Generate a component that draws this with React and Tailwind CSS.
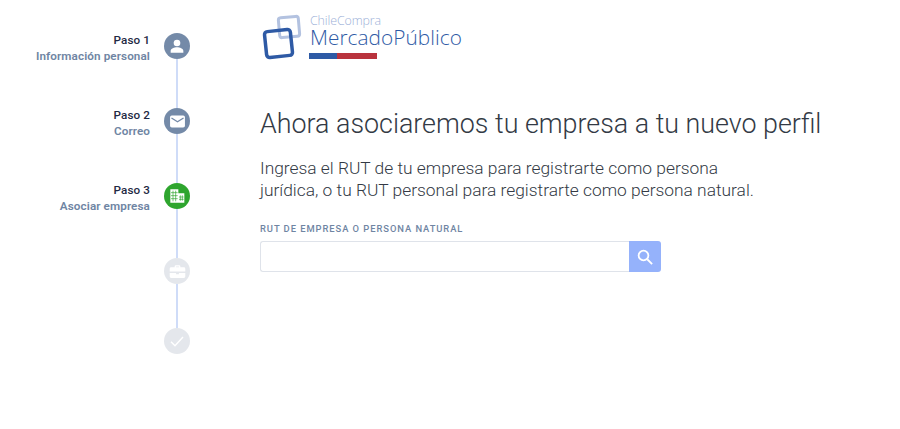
const STEPS = [
  { title: "Paso 1", label: "Información personal", icon: "user", color: "bg-[#748aa8]", height: "h-[75px]" },
  { title: "Paso 2", label: "Correo", icon: "mail", color: "bg-[#748aa8]", height: "h-[75px]" },
  { title: "Paso 3", label: "Asociar empresa", icon: "building", color: "bg-[#2ea52e]", height: "h-[75px]" },
  { icon: "case", color: "bg-[#e4e7ec]", height: "h-[70px]" },
  { icon: "check", color: "bg-[#e4e7ec]", height: "h-[26px]", last: true },
];

function StepIcon({ name }) {
  if (name === "user")
    return (
      <svg width="16" height="16" viewBox="0 0 24 24" fill="#fff">
        <circle cx="12" cy="7.5" r="5" />
        <path d="M2.5 22v-2.5c0-3.6 5.5-5.5 9.5-5.5s9.5 1.9 9.5 5.5V22z" />
      </svg>
    );
  if (name === "mail")
    return (
      <svg width="17" height="17" viewBox="0 0 24 24">
        <rect x="1.5" y="3.5" width="21" height="17" rx="2.5" fill="#fff" />
        <path d="M3.5 7l8.5 5.5L20.5 7" fill="none" stroke="#748aa8" strokeWidth="1.8" />
      </svg>
    );
  if (name === "building")
    return (
      <svg width="16" height="16" viewBox="0 0 24 24">
        <path d="M2 2h12v20H2zM14 8h9v14h-9z" fill="#fff" />
        <path d="M6 4v16M10 4v16M3 7h10M3 11.5h10M3 16h10M17 11v8M20 11v8M15 13.5h7M15 17h7" stroke="#2ea52e" strokeWidth="1" fill="none" />
      </svg>
    );
  if (name === "case")
    return (
      <svg width="17" height="17" viewBox="0 0 24 24" fill="#fff">
        <path d="M8 6V4.5A1.5 1.5 0 0 1 9.5 3h5A1.5 1.5 0 0 1 16 4.5V6h5a2 2 0 0 1 2 2v4H1V8a2 2 0 0 1 2-2zm2 0h4V5h-4z" fillRule="evenodd" />
        <path d="M1 14h9v2h4v-2h9v5a2 2 0 0 1-2 2H3a2 2 0 0 1-2-2z" />
      </svg>
    );
  return (
    <svg width="16" height="16" viewBox="0 0 24 24" fill="none" stroke="#fff" strokeWidth="2.2">
      <path d="M3 13l6 6L21 6" />
    </svg>
  );
}

function Step({ step }) {
  return (
    <div className={`flex justify-end gap-[14px] ${step.height}`}>
      {step.title && (
        <div className="text-right text-[11.7px] leading-[16px] font-medium mt-[-1px] tracking-[0.1px]">
          <p className="text-[#1f2a44]">{step.title}</p>
          <p className="text-[#6f85a3] font-semibold">{step.label}</p>
        </div>
      )}
      <div className="flex flex-col items-center w-[26px]">
        <div className={`w-[26px] h-[26px] shrink-0 rounded-full flex items-center justify-center ${step.color}`}>
          <StepIcon name={step.icon} />
        </div>
        {!step.last && <div className="w-[2px] flex-1 bg-[#cfdcf8]" />}
      </div>
    </div>
  );
}

function Logo() {
  return (
    <div className="flex items-start h-[47px] pl-[2px]">
      <svg width="44" height="46" viewBox="0 0 44 46" className="shrink-0">
        <rect x="17" y="3" width="20" height="20" rx="2.5" transform="rotate(-5 27 13)" fill="none" stroke="#b3c2e0" strokeWidth="3" />
        <rect x="3.5" y="16.5" width="26" height="26" rx="3" transform="rotate(-6 16.5 29.5)" fill="none" stroke="#2e5aa5" strokeWidth="3.5" />
      </svg>
      <div className="ml-[4px] font-['Open_Sans',sans-serif]">
        <p className="text-[12.4px] leading-[13px] font-light text-[#9db1d8] tracking-[-0.1px]">ChileCompra</p>
        <p className="text-[20.8px] leading-[21px] font-light text-[#2e5aa5] tracking-[0.05px]">MercadoPúblico</p>
        <div className="flex h-[6px] mt-[5px] -ml-[1px]">
          <div className="w-[28px] bg-[#2e5aa5]" />
          <div className="w-[40px] bg-[#b9333d]" />
        </div>
      </div>
    </div>
  );
}

export default function App() {
  return (
    <div className="flex w-[900px] h-[429px] bg-white overflow-hidden font-['Roboto',sans-serif]">
      <aside className="w-[190px] shrink-0 pt-[33px]">
        {STEPS.map((step) => (
          <Step key={step.icon} step={step} />
        ))}
      </aside>

      <main className="ml-[70px] pt-[14px]">
        <Logo />
        <h1 className="mt-[43px] text-[26.85px] leading-[40px] font-light text-[#333a45]">
          Ahora asociaremos tu empresa a tu nuevo perfil
        </h1>
        <p className="mt-[13px] text-[17.37px] leading-[22px] font-light text-[#333a45]">
          Ingresa el RUT de tu empresa para registrarte como persona
          <br />
          jurídica, o tu RUT personal para registrarte como persona natural.
        </p>
        <label className="block mt-[21px] text-[9.4px] leading-[14px] font-medium tracking-[0.94px] text-[#6f85a3]">
          RUT DE EMPRESA O PERSONA NATURAL
        </label>
        <div className="flex mt-[5px] w-[401px] h-[31px]">
          <input className="flex-1 min-w-0 border border-[#dfe3ea] rounded-l-[3px] border-r-0 bg-white" />
          <button className="w-[32px] bg-[#95b2fb] rounded-r-[3px] flex items-center justify-center">
            <svg width="18" height="18" viewBox="0 0 24 24" fill="none" stroke="#fff" strokeWidth="2.4">
              <circle cx="10" cy="10" r="6.5" />
              <path d="M15 15l6.5 6.5" />
            </svg>
          </button>
        </div>
      </main>
    </div>
  );
}
